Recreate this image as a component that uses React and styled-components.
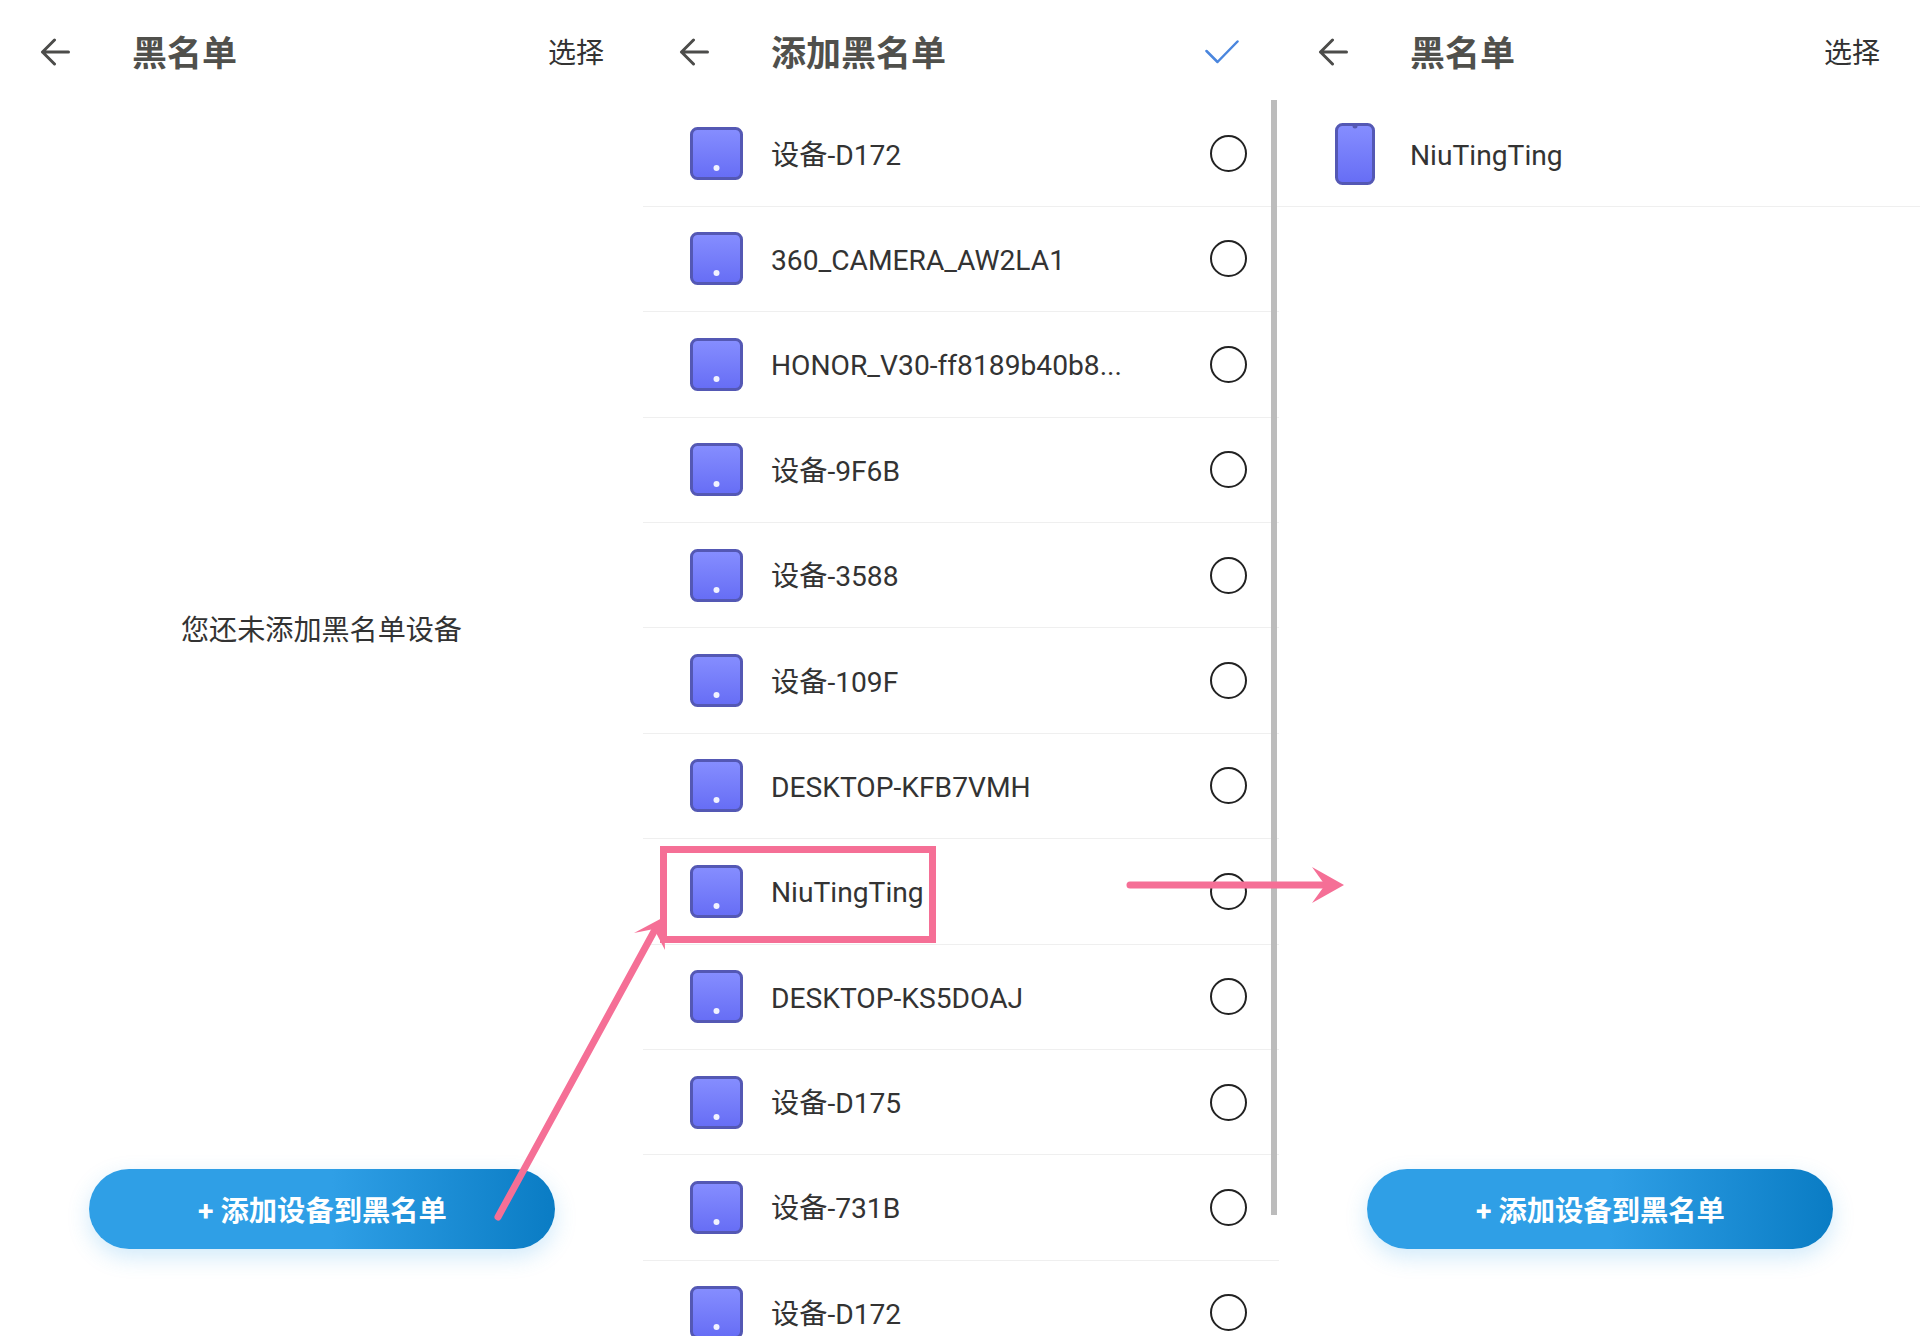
import styled, { createGlobalStyle } from "styled-components";

const GlobalStyle = createGlobalStyle`
  html, body {
    margin: 0;
    padding: 0;
    background: #fff;
  }
  body {
    font-family: Roboto, "Noto Sans CJK SC", sans-serif;
    color: #333;
  }
`;

const devices = [
  "设备-D172",
  "360_CAMERA_AW2LA1",
  "HONOR_V30-ff8189b40b8...",
  "设备-9F6B",
  "设备-3588",
  "设备-109F",
  "DESKTOP-KFB7VMH",
  "NiuTingTing",
  "DESKTOP-KS5DOAJ",
  "设备-D175",
  "设备-731B",
  "设备-D172",
];

const Page = styled.div`
  position: relative;
  width: 1920px;
  height: 1342px;
  overflow: hidden;
  display: grid;
  grid-template-columns: 643px 636px 641px;
`;

const Panel = styled.section`
  position: relative;
  display: flex;
  flex-direction: column;
  height: 1342px;
  min-width: 0;
`;

const Header = styled.header`
  flex: none;
  height: 100px;
  box-sizing: border-box;
  padding: 9px ${(p) => p.$right}px 0 ${(p) => p.$left}px;
  display: flex;
  align-items: center;
  gap: 62px;
`;

const BackIcon = styled.svg`
  flex: none;
  width: 30px;
  height: 28px;
  margin-top: -6px;
  color: #4c4c4a;
`;

const Title = styled.h1`
  flex: 1;
  margin: 0;
  font-size: 35px;
  font-weight: 700;
  line-height: 40px;
  color: #50504c;
`;

const HeaderAction = styled.span`
  margin-bottom: 2px;
  font-size: 28px;
  line-height: 40px;
  color: #333;
`;

const CheckIcon = styled.svg`
  flex: none;
  width: 34px;
  height: 24px;
  margin: -5px 2px 0 0;
  color: #4a86de;
`;

const Empty = styled.div`
  flex: 1;
  display: flex;
  align-items: center;
  justify-content: center;
  padding-bottom: 15px;
  font-size: 28.1px;
  color: #333;
`;

const List = styled.div`
  flex: ${(p) => (p.$fill ? "1" : "none")};
  height: ${(p) => (p.$fill ? "auto" : "1236px")};
  box-sizing: border-box;
  padding-top: 1.4px;
  overflow: hidden;
`;

const Row = styled.div`
  height: 105.4px;
  box-sizing: border-box;
  display: flex;
  align-items: center;
  border-bottom: 1px solid #efefef;
  padding-left: ${(p) => p.$left}px;
  padding-right: 32px;
`;

const IconSlot = styled.div`
  flex: none;
  width: ${(p) => p.$width}px;
  margin-right: ${(p) => p.$gap}px;
  display: flex;
  justify-content: center;
`;

const DeviceName = styled.span`
  flex: 1;
  padding-top: 3px;
  font-size: 28.2px;
  line-height: 33px;
  color: #333;
  white-space: nowrap;
`;

const Radio = styled.span`
  flex: none;
  width: 37px;
  height: 37px;
  box-sizing: border-box;
  border: 2.5px solid #222;
  border-radius: 50%;
`;

const AddButton = styled.button`
  flex: none;
  align-self: center;
  width: 466px;
  height: 80px;
  margin: 0 0 93px;
  padding: 0 0 2px 2px;
  border: none;
  border-radius: 40px;
  background: linear-gradient(90deg, #2f9fe6 0%, #2f9fe6 52%, #0a7cc4 100%);
  box-shadow: 0 8px 22px rgba(47, 159, 230, 0.22);
  color: #fff;
  font-family: inherit;
  font-size: 28.3px;
  font-weight: 700;
`;

const Scrollbar = styled.div`
  position: absolute;
  top: 100px;
  right: 2px;
  width: 6px;
  height: 1115px;
  background: #bcbcbc;
`;

const Highlight = styled.div`
  position: absolute;
  left: 660px;
  top: 846px;
  width: 276px;
  height: 97px;
  box-sizing: border-box;
  border: 7px solid #f56f96;
`;

const Annotations = styled.svg`
  position: absolute;
  left: 0;
  top: 0;
  pointer-events: none;
`;

function BackArrow() {
  return (
    <BackIcon viewBox="0 0 30 28" fill="none" stroke="currentColor" strokeWidth="3" strokeLinecap="round" strokeLinejoin="round">
      <path d="M28.5 14H2.5M14.5 2 2.5 14l12 12" />
    </BackIcon>
  );
}

function TabletIcon() {
  return (
    <svg width="53" height="53" viewBox="0 0 53 53">
      <defs>
        <linearGradient id="tabletFill" x1="0" y1="0" x2="0" y2="1">
          <stop offset="0" stopColor="#868eff" />
          <stop offset="1" stopColor="#666df5" />
        </linearGradient>
      </defs>
      <rect x="1.5" y="1.5" width="50" height="50" rx="6" fill="url(#tabletFill)" stroke="#5458b4" strokeWidth="3" />
      <circle cx="26.5" cy="41" r="3" fill="#f1f2ff" />
    </svg>
  );
}

function PhoneIcon() {
  return (
    <svg width="40" height="62" viewBox="0 0 40 62">
      <defs>
        <linearGradient id="phoneFill" x1="0" y1="0" x2="0" y2="1">
          <stop offset="0" stopColor="#868eff" />
          <stop offset="1" stopColor="#666df5" />
        </linearGradient>
      </defs>
      <rect x="1.5" y="1.5" width="37" height="59" rx="6" fill="url(#phoneFill)" stroke="#5458b4" strokeWidth="3" />
      <path d="M17.5 3h5a2.5 2.5 0 0 1-5 0z" fill="#5458b4" />
    </svg>
  );
}

export default function App() {
  return (
    <Page>
      <GlobalStyle />

      <Panel>
        <Header $left={40} $right={39}>
          <BackArrow />
          <Title>黑名单</Title>
          <HeaderAction>选择</HeaderAction>
        </Header>
        <Empty>您还未添加黑名单设备</Empty>
        <AddButton>+ 添加设备到黑名单</AddButton>
      </Panel>

      <Panel>
        <Header $left={36} $right={38}>
          <BackArrow />
          <Title>添加黑名单</Title>
          <CheckIcon viewBox="0 0 34 24" fill="none" stroke="currentColor" strokeWidth="2.5" strokeLinecap="round" strokeLinejoin="round">
            <path d="M1.5 11 12.5 22 32.5 1.5" />
          </CheckIcon>
        </Header>
        <List>
          {devices.map((name, i) => (
            <Row key={i} $left={47}>
              <IconSlot $width={53} $gap={28}>
                <TabletIcon />
              </IconSlot>
              <DeviceName>{name}</DeviceName>
              <Radio />
            </Row>
          ))}
        </List>
        <Scrollbar />
      </Panel>

      <Panel>
        <Header $left={39} $right={40}>
          <BackArrow />
          <Title>黑名单</Title>
          <HeaderAction>选择</HeaderAction>
        </Header>
        <List $fill>
          <Row $left={56}>
            <IconSlot $width={40} $gap={35}>
              <PhoneIcon />
            </IconSlot>
            <DeviceName>NiuTingTing</DeviceName>
          </Row>
        </List>
        <AddButton>+ 添加设备到黑名单</AddButton>
      </Panel>

      <Highlight />
      <Annotations width="1920" height="1342" viewBox="0 0 1920 1342">
        <path d="M498 1217 657 926" stroke="#f56f96" strokeWidth="7" strokeLinecap="round" fill="none" />
        <path d="M664 917 634 933 654 929 665 950z" fill="#f56f96" />
        <path d="M1130 885H1335" stroke="#f56f96" strokeWidth="7" strokeLinecap="round" fill="none" />
        <path d="M1344 885 1312 867 1325 885 1312 903z" fill="#f56f96" />
      </Annotations>
    </Page>
  );
}
